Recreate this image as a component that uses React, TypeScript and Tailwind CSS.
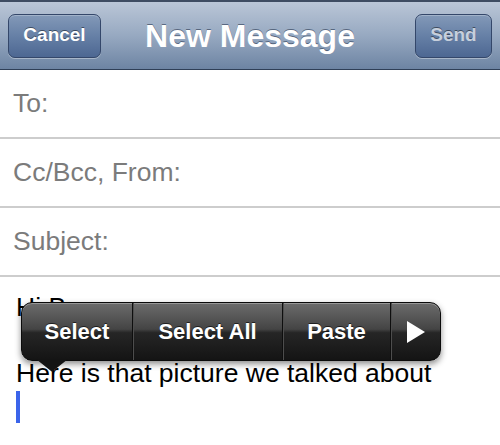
import React from "react";

const fields = ["To:", "Cc/Bcc, From:", "Subject:"];

const NavButton = ({ label, muted }: { label: string; muted?: boolean }) => (
  <button
    className={`h-[44px] rounded-[7px] border border-[#34476a] bg-[linear-gradient(to_bottom,#8399b8_0%,#6680a6_50%,#4d6792_100%)] shadow-[inset_0_1px_0_rgba(255,255,255,0.25),0_1px_0_rgba(255,255,255,0.35)] text-[19px] font-bold [text-shadow:0_-1px_0_rgba(0,0,0,0.45)] ${
      muted ? "text-[#c6cfdc]" : "text-white"
    }`}
  >
    {label}
  </button>
);

const App = () => {
  return (
    <div className="w-[500px] h-[445px] overflow-hidden bg-white font-['Liberation_Sans',Arial,sans-serif]">
      <header className="h-[70px] grid grid-cols-[1fr_auto_1fr] items-center px-2 border-t-2 border-b border-t-[#3e4c62] border-b-[#2f3f57] bg-[linear-gradient(to_bottom,#bac6d7_0%,#97a9c1_50%,#6d84a3_100%)]">
        <div className="justify-self-start w-[93px] grid">
          <NavButton label="Cancel" />
        </div>
        <h1 className="text-[32px] font-bold text-white [text-shadow:0_-1px_0_rgba(40,55,80,0.6)] leading-none">
          New Message
        </h1>
        <div className="justify-self-end w-[77px] grid">
          <NavButton label="Send" muted />
        </div>
      </header>

      {fields.map((f) => (
        <div
          key={f}
          className="h-[69px] flex items-center pl-[13px] border-b-2 border-[#cdcdcd] text-[26.5px] text-[#7b7b7b]"
        >
          {f}
        </div>
      ))}

      <div className="relative pt-[14px] pl-4 text-[26.5px] leading-[33px] text-black">
        <p>Hi Barry,</p>
        <p>&nbsp;</p>
        <p>Here is that picture we talked about</p>
        <div className="h-[33px] flex items-center">
          <span className="block w-[4px] h-[32px] bg-[#3b64ea]" />
        </div>

        <div className="absolute left-[21px] top-[25px] h-[59px] flex rounded-[11px] border border-[#0b0b0b] bg-[linear-gradient(to_bottom,#6c6c6c_0%,#444_46%,#262626_52%,#141414_100%)] shadow-[0_3px_6px_rgba(0,0,0,0.45),inset_0_1px_0_rgba(255,255,255,0.3)] text-white text-[22px] font-bold [text-shadow:0_-1px_0_rgba(0,0,0,0.6)]">
          <div className="w-[110px] flex items-center justify-center">Select</div>
          <div className="w-[150px] flex items-center justify-center border-l border-[#0e0e0e] shadow-[inset_1px_0_0_#4d4d4d]">
            Select All
          </div>
          <div className="w-[108px] flex items-center justify-center border-l border-[#0e0e0e] shadow-[inset_1px_0_0_#4d4d4d]">
            Paste
          </div>
          <div className="flex-1 w-[50px] flex items-center justify-center border-l border-[#0e0e0e] shadow-[inset_1px_0_0_#4d4d4d]">
            <svg width="18" height="22" viewBox="0 0 18 22">
              <path d="M0 0 L18 11 L0 22 Z" fill="#fff" />
            </svg>
          </div>
          <svg
            className="absolute left-[14px] top-full -mt-px"
            width="32"
            height="13"
            viewBox="0 0 32 13"
          >
            <path d="M0 0 L32 0 L17 12 Q16 13 15 12 Z" fill="#141414" />
          </svg>
        </div>
      </div>
    </div>
  );
};

export default App;
